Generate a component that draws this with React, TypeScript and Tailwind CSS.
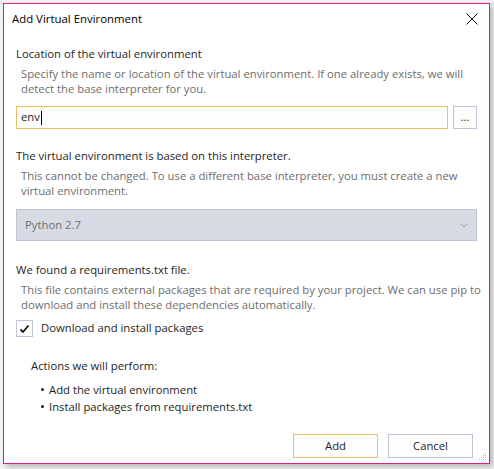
import React from "react";

const font = { fontFamily: '"Segoe UI", "Open Sans", "Noto Sans", sans-serif' };

export default function App() {
  return (
    <div className="w-[494px] h-[469px] bg-[#f3f3f3] pt-[3px] pl-[3px]" style={font}>
      <div className="w-[487px] h-[461px] bg-white border border-[#e3198c] shadow-[3px_3px_6px_rgba(0,0,0,0.25)] flex flex-col text-[11.3px] text-[#1e1e1e] relative">
        {/* title bar */}
        <div className="h-[30px] flex items-center justify-between pl-[8px] pr-[10px]">
          <span className="text-[11.4px] text-black">Add Virtual Environment</span>
          <svg width="12" height="12" viewBox="0 0 12 12" className="mr-[1px]">
            <path d="M0.5 0.5 L11.5 11.5 M11.5 0.5 L0.5 11.5" stroke="#111" strokeWidth="1" />
          </svg>
        </div>
        <div className="flex flex-col pl-[12px] pr-[12px]">
          <div className="mt-[12px] leading-[15px]">Location of the virtual environment</div>
          <div className="mt-[5px] pl-[5px] -mr-[8px] text-[#6d6d6d] leading-[15px]">
            Specify the name or location of the virtual environment. If one already exists, we will detect the base interpreter for you.
          </div>
          <div className="mt-[10px] flex gap-[5px]">
            <div className="flex-1 h-[23px] border border-[#e5c365] bg-[#fdfdfd] flex items-center pl-[4px]">
              <span>env</span>
              <span className="w-px h-[14px] bg-black ml-[1px]" />
            </div>
            <div className="w-[24px] h-[23px] border border-[#bfc7d7] bg-[#fdfdfd] flex items-end justify-center pb-[6px] text-[11px] leading-none">...</div>
          </div>

          <div className="mt-[19px] leading-[15px]">The virtual environment is based on this interpreter.</div>
          <div className="mt-[5px] pl-[5px] -mr-[8px] text-[#6d6d6d] leading-[15px]">
            This cannot be changed. To use a different base interpreter, you must create a new virtual environment.
          </div>
          <div className="mt-[11px] h-[32px] border border-[#bec5d4] bg-[#d6dbe5] flex items-center justify-between pl-[8px] pr-[8px] text-[#707070]">
            <span>Python 2.7</span>
            <svg width="8" height="5" viewBox="0 0 8 5">
              <path d="M0.5 0.5 L4 4 L7.5 0.5" stroke="#9aa0ab" fill="none" strokeWidth="1" />
            </svg>
          </div>

          <div className="mt-[21px] leading-[15px]">We found a requirements.txt file.</div>
          <div className="mt-[5px] pl-[5px] -mr-[8px] text-[#6d6d6d] leading-[15px]">
            This file contains external packages that are required by your project. We can use pip to download and install these dependencies automatically.
          </div>
          <div className="mt-[8px] flex items-center gap-[8px]">
            <div className="w-[17px] h-[17px] border border-[#bfc7d7] bg-white flex items-center justify-center">
              <svg width="11" height="10" viewBox="0 0 11 10">
                <path d="M1.5 5.5 L4 8 L9.5 1.5" stroke="#111" fill="none" strokeWidth="1.8" />
              </svg>
            </div>
            <span>Download and install packages</span>
          </div>

          <div className="mt-[21px] pl-[15px] leading-[15px]">Actions we will perform:</div>
          <ul className="mt-[8px] pl-[25px] leading-[17px]">
            <li className="flex items-center gap-[5px]"><span className="w-[3px] h-[3px] bg-[#1e1e1e] rounded-full" />Add the virtual environment</li>
            <li className="flex items-center gap-[5px]"><span className="w-[3px] h-[3px] bg-[#1e1e1e] rounded-full" />Install packages from requirements.txt</li>
          </ul>
        </div>
        <div className="mt-auto mb-[5px] flex justify-end gap-[10px] pr-[16px]">
          <div className="w-[85px] h-[24px] border border-[#e5c365] bg-[#fdfdfd] flex items-center justify-center">Add</div>
          <div className="w-[85px] h-[24px] border border-[#bfc7d7] bg-[#fdfdfd] flex items-center justify-center">Cancel</div>
        </div>
        <svg width="8" height="8" viewBox="0 0 8 8" className="absolute right-[2px] bottom-[2px]">
          <g fill="#b8b8b8">
            <rect x="6" y="0" width="1" height="1" />
            <rect x="4" y="2" width="1" height="1" /><rect x="6" y="2" width="1" height="1" />
            <rect x="2" y="4" width="1" height="1" /><rect x="4" y="4" width="1" height="1" /><rect x="6" y="4" width="1" height="1" />
            <rect x="0" y="6" width="1" height="1" /><rect x="2" y="6" width="1" height="1" /><rect x="4" y="6" width="1" height="1" /><rect x="6" y="6" width="1" height="1" />
          </g>
        </svg>
      </div>
    </div>
  );
}
